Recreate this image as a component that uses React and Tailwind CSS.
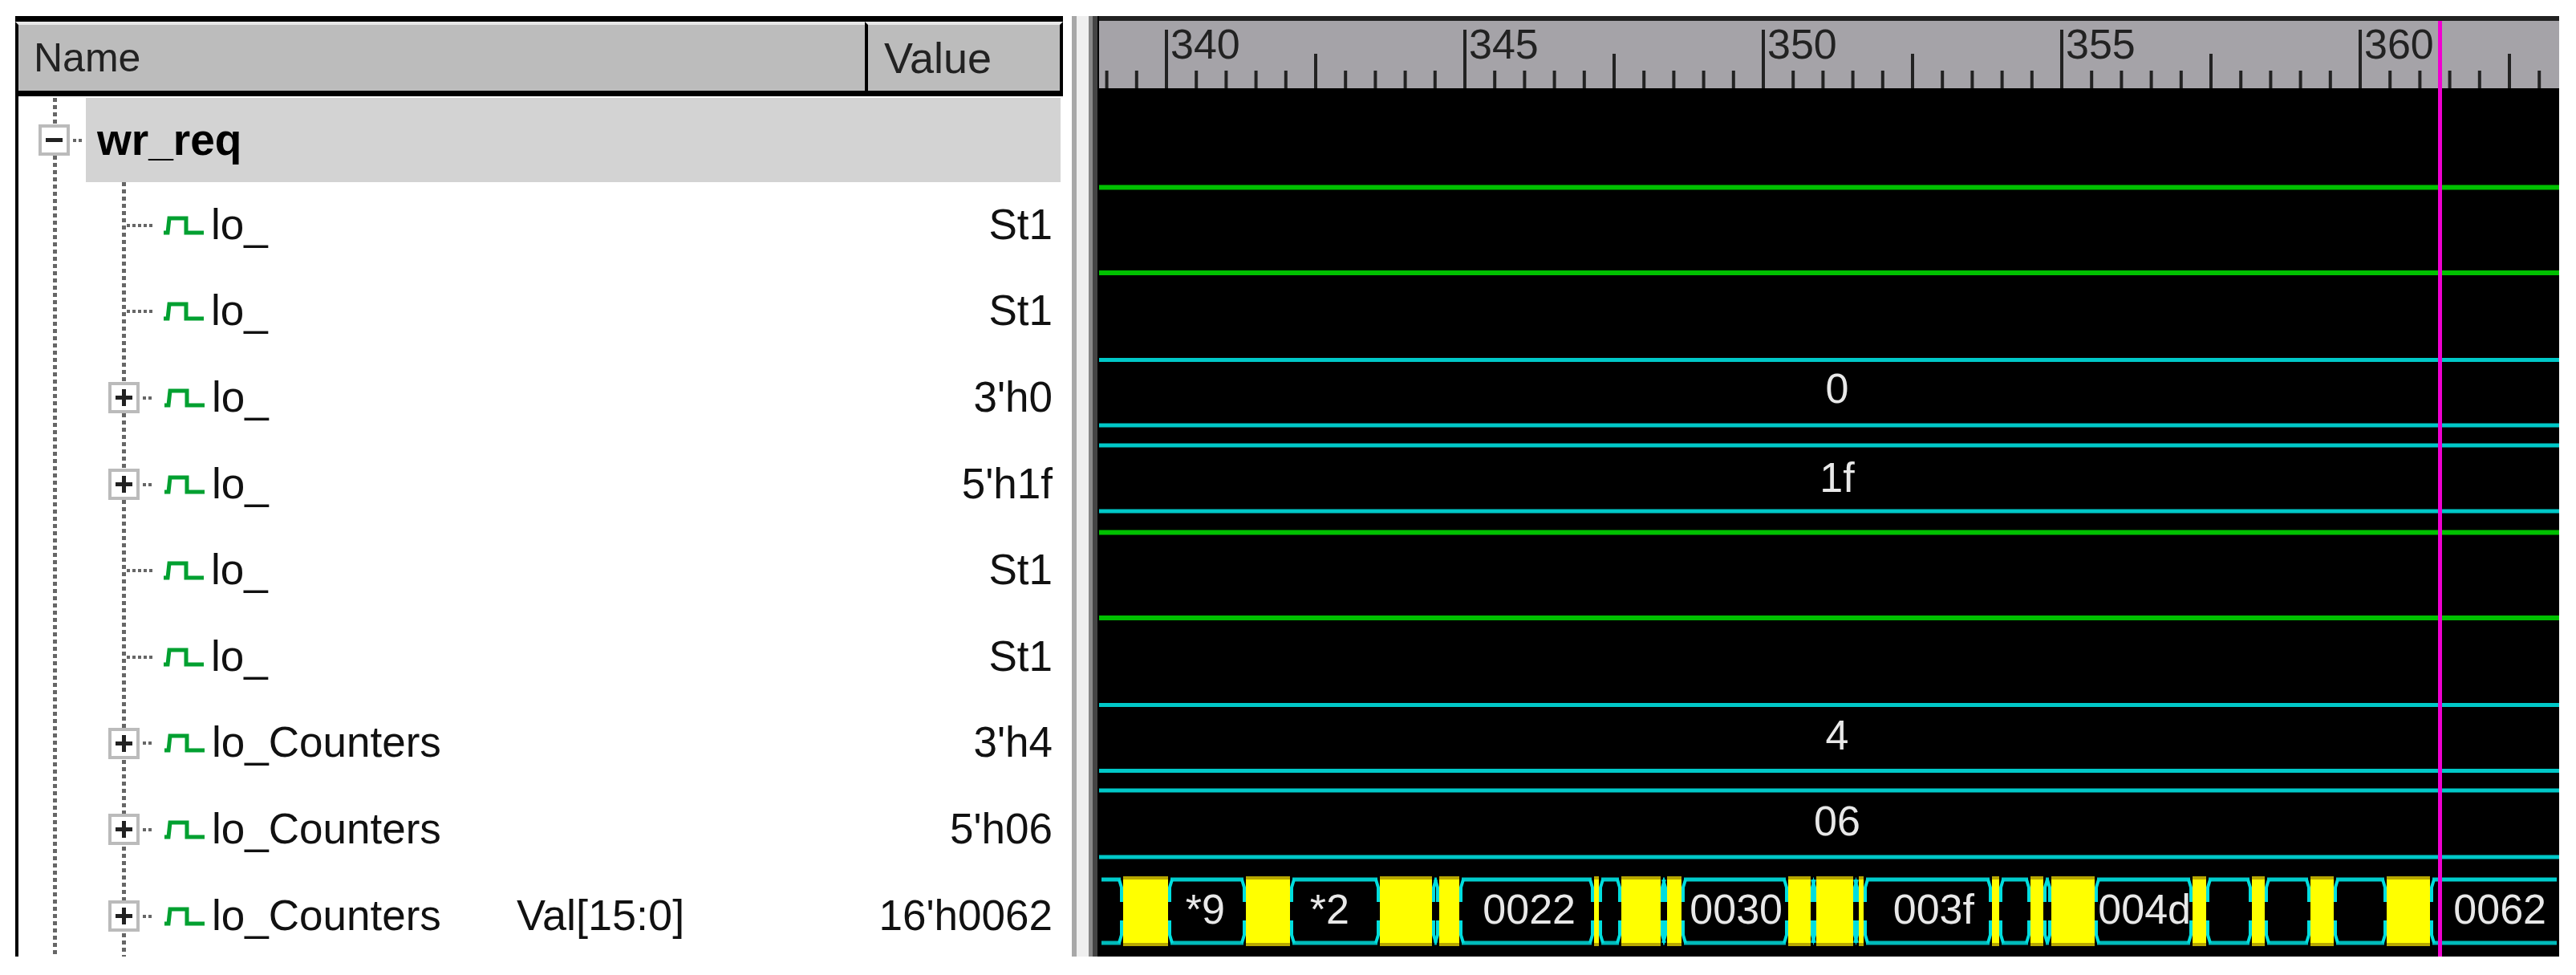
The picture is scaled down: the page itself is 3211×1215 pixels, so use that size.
const rows = [
  { name: 'lo_', value: 'St1' },
  { name: 'lo_', value: 'St1' },
  { name: 'lo_', value: "3'h0", bus: true },
  { name: 'lo_', value: "5'h1f", bus: true },
  { name: 'lo_', value: 'St1' },
  { name: 'lo_', value: 'St1' },
  { name: 'lo_Counters', value: "3'h4", bus: true },
  { name: 'lo_Counters', value: "5'h06", bus: true },
  { name: 'lo_Counters', extra: 'Val[15:0]', value: "16'h0062", bus: true },
];

const greenLines = [233.5, 340, 663.5, 770];
const cyanLines = [448.5, 530, 555, 637, 878.5, 960.5, 985, 1068];
const labels = [
  { text: '0', y: 502 },
  { text: '1f', y: 613 },
  { text: '4', y: 934 },
  { text: '06', y: 1041 },
];

const busTop = 1096;
const busBottom = 1175;

const unknowns = [
  [1400, 1456], [1553, 1608], [1720, 1785], [1794, 1819], [1987, 1993], [2021, 2070],
  [2078, 2096], [2229, 2257], [2264, 2310], [2317, 2323], [2483, 2492], [2531, 2547],
  [2557, 2611], [2733, 2750], [2807, 2823], [2880, 2909], [2975, 3029],
];

const values = [
  { from: 1370, to: 1400 },
  { from: 1456, to: 1553, text: '*9', end: 1527 },
  { from: 1608, to: 1720, text: '*2', end: 1682 },
  { from: 1785, to: 1794 },
  { from: 1819, to: 1987, text: '0022', end: 1964 },
  { from: 1993, to: 2021 },
  { from: 2070, to: 2078 },
  { from: 2096, to: 2229, text: '0030', end: 2222 },
  { from: 2257, to: 2264 },
  { from: 2310, to: 2317 },
  { from: 2323, to: 2483, text: '003f', end: 2461 },
  { from: 2492, to: 2531 },
  { from: 2547, to: 2557 },
  { from: 2611, to: 2733, text: '004d', end: 2731 },
  { from: 2750, to: 2807 },
  { from: 2823, to: 2880 },
  { from: 2909, to: 2975 },
  { from: 3029, to: 3190, text: '0062', end: 3174 },
];

const ticks = Array.from({ length: 49 }, (_, i) => i - 2);
const rulerLabels = [
  { text: '340', at: 0 },
  { text: '345', at: 10 },
  { text: '350', at: 20 },
  { text: '355', at: 30 },
  { text: '360', at: 40 },
];

function Pulse() {
  return (
    <svg width="52" height="26" viewBox="0 0 52 26" className="shrink-0">
      <path d="M1 22 H6 L8 4 H29 V22 H51" fill="none" stroke="#00a030" strokeWidth="5" />
    </svg>
  );
}

function TreeBox({ open }) {
  return (
    <svg width="39" height="39" viewBox="0 0 39 39" className="relative shrink-0">
      <rect x="2" y="2" width="35" height="35" fill="#fff" stroke="#bbb" strokeWidth="4" />
      <path d="M9 19.5 H30" stroke="#222" strokeWidth="5" />
      {!open && <path d="M19.5 9 V30" stroke="#222" strokeWidth="5" />}
    </svg>
  );
}

function Dots({ className }) {
  return (
    <div
      className={`h-1 bg-[repeating-linear-gradient(to_right,#666_0_4px,transparent_4px_7px)] ${className}`}
    />
  );
}

function SignalRow({ row }) {
  return (
    <div className="flex h-[107.6px] shrink-0 items-center pl-[112px] pr-[16px]">
      {row.bus ? (
        <>
          <TreeBox />
          <Dots className="ml-1 w-[13px]" />
        </>
      ) : (
        <Dots className="ml-[23px] w-[32px]" />
      )}
      <div className="ml-[13px]">
        <Pulse />
      </div>
      <span className="mb-[3px] ml-2 w-[380px] shrink-0 text-[53px] leading-none text-[#111]">{row.name}</span>
      {row.extra && <span className="mb-[3px] text-[54px] leading-none text-[#111]">{row.extra}</span>}
      <span className="mb-[3px] ml-auto text-[53px] leading-none text-[#111]">{row.value}</span>
    </div>
  );
}

function NamesPanel() {
  return (
    <div className="flex w-[1309px] shrink-0 flex-col">
      <div className="flex h-[100px] w-[1306px] shrink-0 border-y-[7px] border-black leading-none text-[#222]">
        <div className="flex w-[1059px] items-center border-t-4 border-l-4 border-t-[#e8e8e8] border-l-black bg-[#bcbcbc] pl-[19px] text-[50px]">
          Name
        </div>
        <div className="flex flex-1 items-center border-x-4 border-x-black border-t-4 border-t-[#e8e8e8] bg-[#bcbcbc] pl-[20px] text-[54px]">
          Value
        </div>
      </div>
      <div className="relative flex h-[1072px] flex-col overflow-hidden border-l-4 border-black bg-white pt-[2px]">
        <div className="absolute top-[2px] bottom-0 left-[43px] w-[5px] bg-[repeating-linear-gradient(to_bottom,#666_0_5px,transparent_5px_9px)]" />
        <div className="absolute top-[107px] bottom-0 left-[129px] w-[5px] bg-[repeating-linear-gradient(to_bottom,#666_0_5px,transparent_5px_9px)]" />
        <div className="flex h-[105px] shrink-0 items-center pl-[25px] pr-[6px]">
          <TreeBox open />
          <Dots className="ml-[4px] w-[13px]" />
          <div className="relative ml-[3px] flex h-full flex-1 items-center bg-[#d3d3d3] pl-[14px] text-[55px] leading-none font-bold text-black">
            wr_req
          </div>
        </div>
        {rows.map((row, i) => (
          <SignalRow key={i} row={row} />
        ))}
      </div>
    </div>
  );
}

function Splitter() {
  return (
    <div className="ml-[8px] flex w-[34px] shrink-0">
      <div className="w-[6px] bg-[#a8a8a8]" />
      <div className="w-[15px] bg-[#efefef]" />
      <div className="w-[5px] bg-[#888]" />
      <div className="w-[6px] bg-[#444]" />
      <div className="w-[2px] bg-black" />
    </div>
  );
}

function Ruler() {
  return (
    <div className="h-[90px] shrink-0 border-t-[6px] border-[#222] bg-[#a5a3a8]">
      <svg width="1820" height="84" viewBox="1370 26 1820 84" className="block">
        {ticks.map((i) => {
          const x = 1454 + i * 37.2;
          const top = i % 10 === 0 ? 37 : i % 5 === 0 ? 67 : 88;
          return <path key={i} d={`M${x} ${top} V110`} stroke="#222" strokeWidth="4" />;
        })}
        {rulerLabels.map((l) => (
          <text key={l.text} x={1454 + l.at * 37.2 + 5} y="73" fontSize="52" fill="#222">
            {l.text}
          </text>
        ))}
      </svg>
    </div>
  );
}

function BusEnd({ x, dir }) {
  const d = dir * 3;
  return (
    <path
      d={`M${x + d} ${busTop} L${x} ${busTop + 10} V${busTop + 28} M${x} ${busBottom - 28} V${busBottom - 10} L${x + d} ${busBottom}`}
      fill="none"
      stroke="#00dede"
      strokeWidth="4"
    />
  );
}

function Waves() {
  return (
    <div className="flex-1 bg-black">
      <svg width="1820" height="1082" viewBox="1370 110 1820 1082" className="block">
        {greenLines.map((y) => (
          <path key={y} d={`M1370 ${y} H3190`} stroke="#00c000" strokeWidth="6" />
        ))}
        {cyanLines.map((y) => (
          <path key={y} d={`M1370 ${y} H3190`} stroke="#00c8c8" strokeWidth="5" />
        ))}
        {labels.map((l) => (
          <text key={l.y} x="2290" y={l.y} fontSize="52" fill="#e8e8e8" textAnchor="middle">
            {l.text}
          </text>
        ))}
        {values.map((v) => (
          <g key={v.from}>
            <path d={`M${v.from + 3} ${busTop} H${v.to - 3}`} stroke="#00cccc" strokeWidth="5" />
            <path d={`M${v.from + 3} ${busBottom} H${v.to - 3}`} stroke="#00baba" strokeWidth="5" />
            {v.from > 1370 && <BusEnd x={v.from + 2} dir={1} />}
            {v.to < 3190 && <BusEnd x={v.to - 2} dir={-1} />}
            {v.text && (
              <text x={v.end} y="1151" fontSize="52" fill="#e8e8e8" textAnchor="end">
                {v.text}
              </text>
            )}
          </g>
        ))}
        {unknowns.map(([a, b]) => (
          <g key={a}>
            <rect x={a} y="1092" width={b - a} height="87" fill="#ffff00" />
            <rect x={a} y="1092" width={b - a} height="4" fill="#b8a800" />
            <rect x={a} y="1175" width={b - a} height="4" fill="#b8a800" />
          </g>
        ))}
      </svg>
    </div>
  );
}

export default function App() {
  return (
    <div className="flex h-[1215px] w-[3211px] bg-white pt-5 pl-[19px] font-['Liberation_Sans',Arial,sans-serif]">
      <div className="flex h-[1172px]">
        <NamesPanel />
        <Splitter />
        <div className="relative flex w-[1820px] shrink-0 flex-col">
          <Ruler />
          <Waves />
          {/* cursor */}
          <div className="absolute top-[6px] bottom-0 left-[1669px] w-[5px] bg-[#f000d0]" />
        </div>
      </div>
    </div>
  );
}
